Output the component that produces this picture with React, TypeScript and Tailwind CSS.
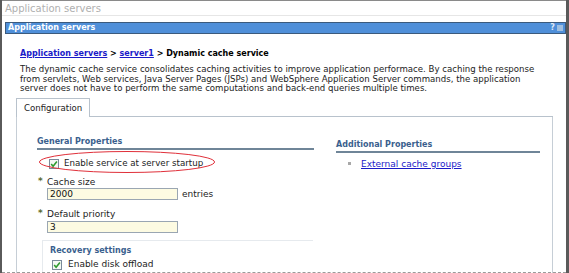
function Check() {
  return (
    <svg width="10" height="10" viewBox="0 0 10 10" className="shrink-0">
      <rect x="0.5" y="0.5" width="9" height="9" fill="#f4f8f4" stroke="#7a8a9a" />
      <path d="M2.2 5 L4.1 7.2 L7.9 2.6" fill="none" stroke="#2f9a2f" strokeWidth="1.6" />
    </svg>
  );
}

function Required() {
  return <span className="w-[10px] pl-[1px] text-[#5c6b2e] text-[9px] leading-none font-bold">*</span>;
}

export default function App() {
  return (
    <div className="relative w-[569px] h-[273px] overflow-hidden bg-white border-l-2 border-r-[3px] border-[#5a5a5a] font-['DejaVu_Sans',sans-serif]">
      {/* window title */}
      <div className="h-[16px] pl-[3px] text-[10px] leading-[15px] text-[#b0b0b0] border-t border-[#8a8a8a] border-b border-b-[#e6e6e6]">
        Application servers
      </div>

      {/* portlet bar */}
      <div className="mt-[6px] ml-[3px] h-[12px] flex items-center justify-between bg-[#4f8fd9] border border-[#3b5a7c] px-[2px]">
        <span className="text-white font-bold text-[8px] leading-none">Application servers</span>
        <span className="flex items-center gap-[2px] text-[8px] leading-none text-[#dfe9f5] font-bold">
          <span>?</span>
          <span className="w-[6px] h-[6px] bg-[#9fbfe0]" />
        </span>
      </div>

      <div className="pl-[14px] pr-[6px]">
        <div className="mt-[15px] pl-[4px] text-[8px] leading-[10px] font-bold text-black">
          <a className="text-[#1a1ac8] underline">Application servers</a> &gt;{' '}
          <a className="text-[#1a1ac8] underline">server1</a> &gt; Dynamic cache service
        </div>

        <p className="mt-[6px] pl-[4px] text-[8.6px] leading-[9.5px] text-[#222] whitespace-nowrap">
          The dynamic cache service consolidates caching activities to improve application performace. By caching the response
          <br />
          from servlets, Web services, Java Server Pages (JSPs) and WebSphere Application Server commands, the application
          <br />
          server does not have to perform the same computations and back-end queries multiple times.
        </p>

        {/* tabs */}
        <div className="mt-[4px] flex">
          <div className="h-[19px] px-[7px] border border-b-0 border-[#b8c2cc] text-[8.6px] leading-[18px] text-[#222] bg-white">
            Configuration
          </div>
          <div className="flex-1 mr-[7px] border-b border-[#b8c2cc]" />
        </div>

        <div className="relative mr-[7px] h-[200px] border-l border-r border-[#c6ced6] pl-[20px] pt-[20px] flex">
          <div className="w-[277px]">
            <div className="text-[8px] leading-[10px] font-bold text-[#3a5f8e] border-b-2 border-[#6f8598] pb-[1px]">
              General Properties
            </div>

            <div className="mt-[9px] ml-[12px] flex items-center gap-[5px] text-[8.7px] leading-none text-[#222]">
              <Check />
              <span>Enable service at server startup</span>
            </div>

            <div className="mt-[8px] flex items-center text-[9px] leading-[10px] text-[#222]">
              <Required />
              <span>Cache size</span>
            </div>
            <div className="mt-[1px] ml-[10px] flex items-center gap-[4px]">
              <div className="w-[131px] h-[12px] border border-[#9aa6b2] bg-[#fdfbe2] text-[9px] leading-[10px] pl-[2px] text-[#111]">2000</div>
              <span className="text-[9px] leading-[10px] text-[#222]">entries</span>
            </div>

            <div className="mt-[9px] flex items-center text-[9px] leading-[10px] text-[#222]">
              <Required />
              <span>Default priority</span>
            </div>
            <div className="mt-[2px] ml-[10px] w-[131px] h-[12px] border border-[#9aa6b2] bg-[#fdfbe2] text-[9px] leading-[10px] pl-[2px] text-[#111]">
              3
            </div>

            <div className="mt-[7px] ml-[5px] w-[271px] h-[40px] border-l border-t border-[#e6eaee] pl-[7px] pt-[5px]">
              <div className="text-[8px] leading-[10px] font-bold text-[#3a5f8e]">Recovery settings</div>
              <div className="mt-[4px] ml-[2px] flex items-center gap-[6px] text-[9px] leading-none text-[#222]">
                <Check />
                <span>Enable disk offload</span>
              </div>
            </div>
          </div>

          <div className="ml-[22px] mt-[3px] w-[204px]">
            <div className="text-[8px] leading-[10px] font-bold text-[#3a5f8e] border-b-2 border-[#6f8598] pb-[1px]">
              Additional Properties
            </div>
            <div className="mt-[6px] ml-[12px] flex items-center gap-[10px]">
              <span className="w-[3px] h-[3px] bg-[#a8a8a8]" />
              <a className="text-[9px] leading-[10px] text-[#1a1ac8] underline">External cache groups</a>
            </div>
          </div>
        </div>
      </div>

      {/* red highlight ellipse */}
      <svg className="absolute left-[36px] top-[150px]" width="178" height="24" viewBox="0 0 178 24">
        <ellipse cx="89" cy="12" rx="87.5" ry="10.5" fill="none" stroke="#e0303a" strokeWidth="1" />
      </svg>

      <div className="absolute left-0 right-0 bottom-0 border-b border-dashed border-[#9a9a9a]" />
    </div>
  );
}
